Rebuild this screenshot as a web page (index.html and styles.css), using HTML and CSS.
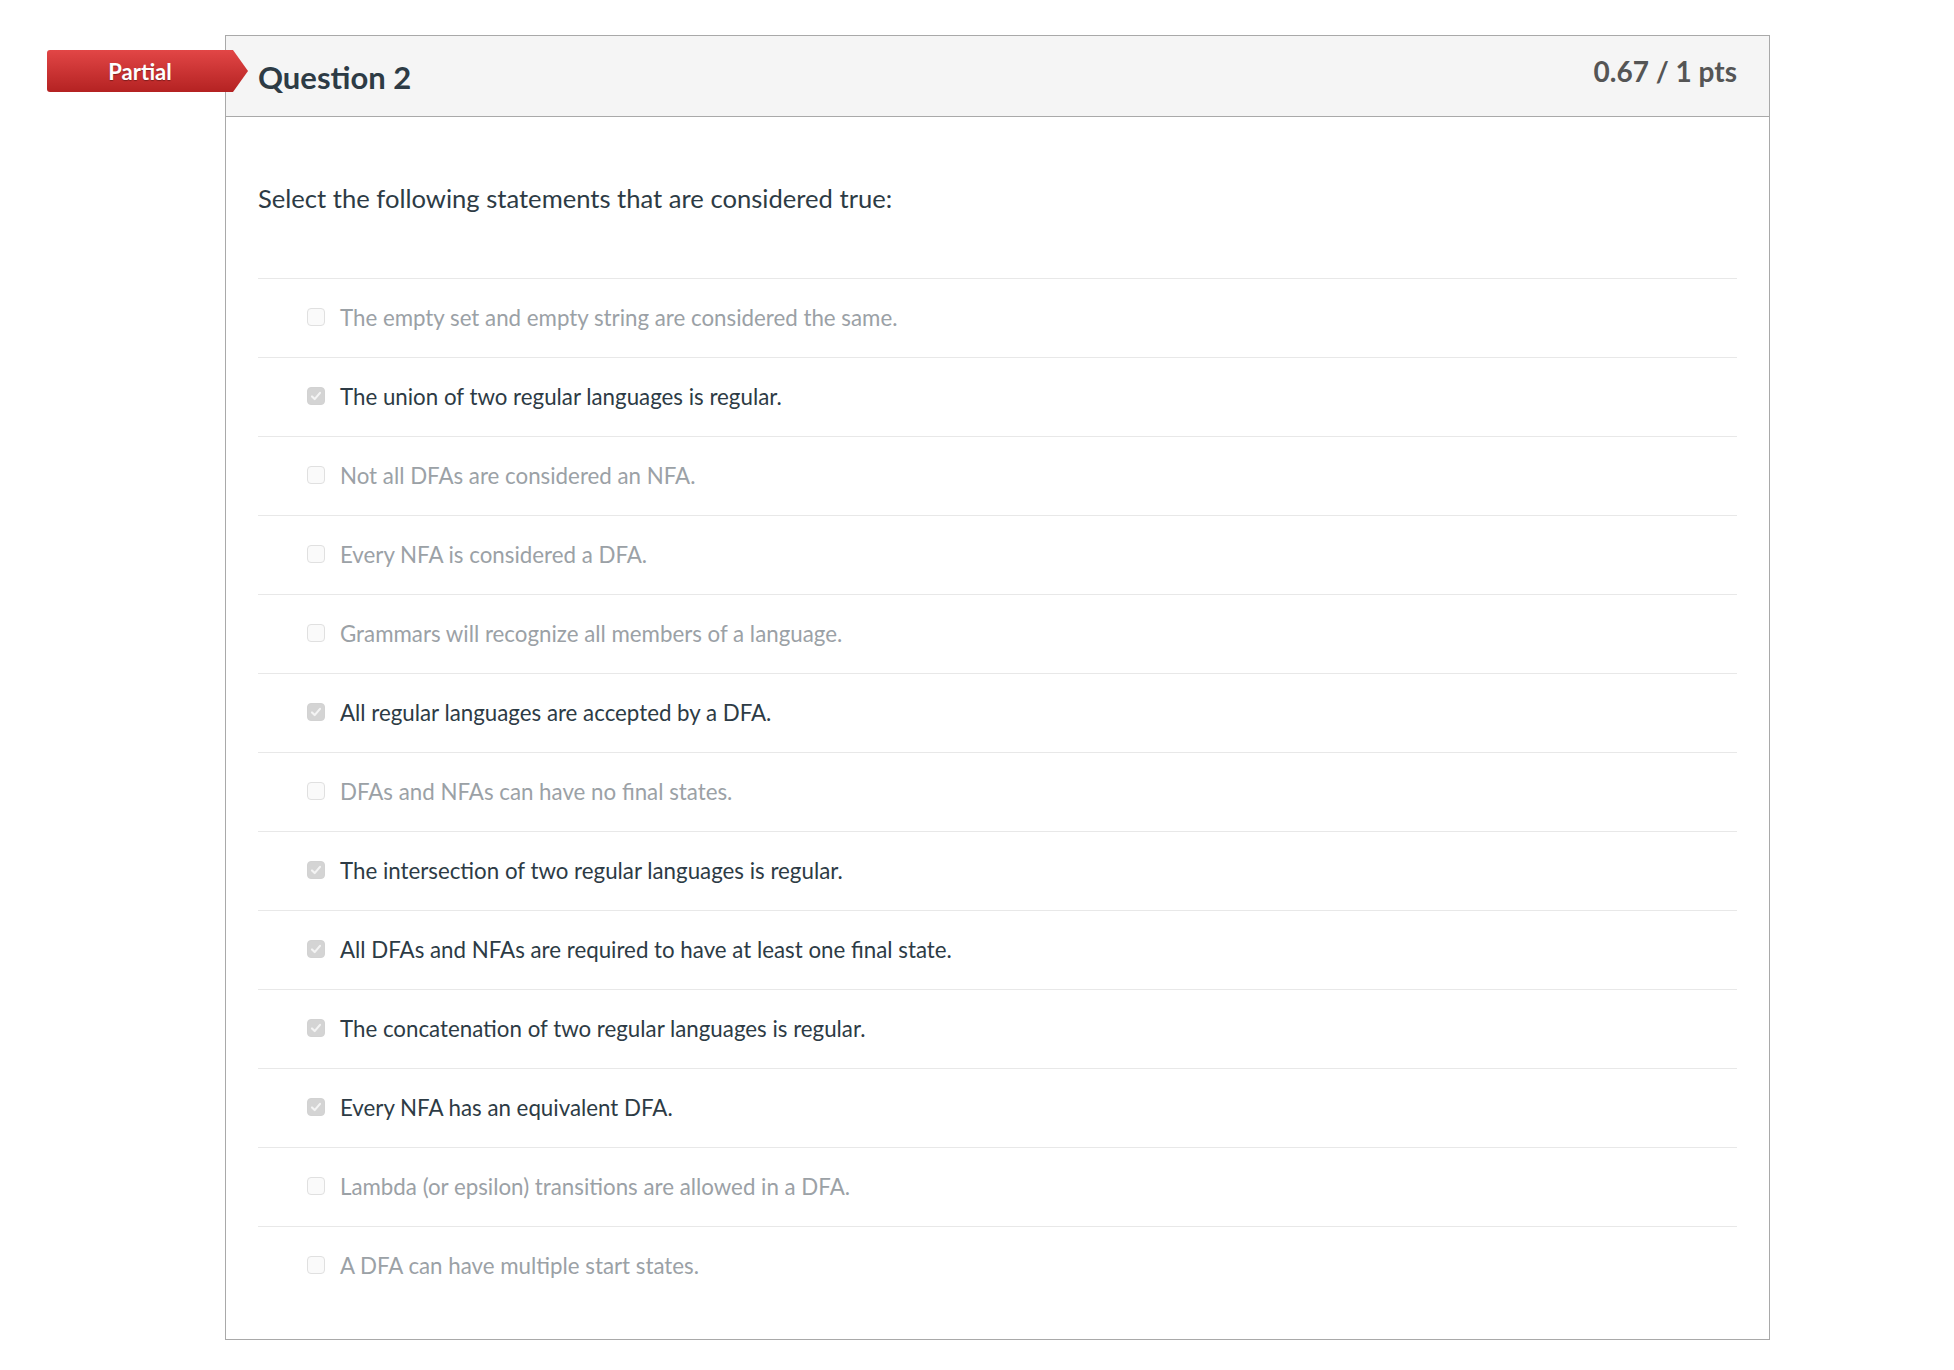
FILE: index.html
```html
<!DOCTYPE html>
<html lang="en">
<head>
    <meta charset="UTF-8">
    <meta name="viewport" content="width=device-width, initial-scale=1.0">
    <title>Question 2</title>
    <link rel="stylesheet" href="styles.css">
</head>
<body>
    <div class="quiz">
        <div class="question">
            <!-- Grade flag -->
            <span class="flag">Partial</span>

            <div class="question-header">
                <h2 class="question-title">Question 2</h2>
                <span class="points">0.67 / 1 pts</span>
            </div>

            <div class="question-body">
                <p class="question-text">Select the following statements that are considered true:</p>

                <ul class="answers">
                    <li class="answer"><span class="box"></span>The empty set and empty string are considered the same.</li>
                    <li class="answer selected"><span class="box"><svg viewBox="0 0 18 18"><path d="M4.5 9.5l3 3 6-7" /></svg></span>The union of two regular languages is regular.</li>
                    <li class="answer"><span class="box"></span>Not all DFAs are considered an NFA.</li>
                    <li class="answer"><span class="box"></span>Every NFA is considered a DFA.</li>
                    <li class="answer"><span class="box"></span>Grammars will recognize all members of a language.</li>
                    <li class="answer selected"><span class="box"><svg viewBox="0 0 18 18"><path d="M4.5 9.5l3 3 6-7" /></svg></span>All regular languages are accepted by a DFA.</li>
                    <li class="answer"><span class="box"></span>DFAs and NFAs can have no final states.</li>
                    <li class="answer selected"><span class="box"><svg viewBox="0 0 18 18"><path d="M4.5 9.5l3 3 6-7" /></svg></span>The intersection of two regular languages is regular.</li>
                    <li class="answer selected"><span class="box"><svg viewBox="0 0 18 18"><path d="M4.5 9.5l3 3 6-7" /></svg></span>All DFAs and NFAs are required to have at least one final state.</li>
                    <li class="answer selected"><span class="box"><svg viewBox="0 0 18 18"><path d="M4.5 9.5l3 3 6-7" /></svg></span>The concatenation of two regular languages is regular.</li>
                    <li class="answer selected"><span class="box"><svg viewBox="0 0 18 18"><path d="M4.5 9.5l3 3 6-7" /></svg></span>Every NFA has an equivalent DFA.</li>
                    <li class="answer"><span class="box"></span>Lambda (or epsilon) transitions are allowed in a DFA.</li>
                    <li class="answer"><span class="box"></span>A DFA can have multiple start states.</li>
                </ul>
            </div>
        </div>
    </div>
</body>
</html>
```

FILE: styles.css
```css
/* General Styling */
* {
    box-sizing: border-box;
}

body {
    margin: 0;
    background-color: #fff;
    font-family: Lato, "Open Sans", sans-serif;
    color: #2d3b45;
}

.quiz {
    padding: 35px 0 0 225px;
}

/* Question card */
.question {
    position: relative;
    width: 1545px;
    border: 1px solid #a9a9a9;
}

.flag {
    position: absolute;
    left: -179px;
    top: 14px;
    width: 201px;
    height: 42px;
    padding-right: 15px;
    display: flex;
    align-items: center;
    justify-content: center;
    background: linear-gradient(#e24646, #b42222);
    border-radius: 3px 0 0 3px;
    clip-path: polygon(0 0, 186px 0, 100% 50%, 186px 100%, 0 100%);
    color: #fff;
    font-size: 22px;
    font-weight: bold;
    text-shadow: 0 1px 1px rgba(0, 0, 0, 0.35);
}

.question-header {
    height: 81px;
    padding: 0 32px;
    display: flex;
    justify-content: space-between;
    align-items: center;
    background-color: #f5f5f5;
    border-bottom: 1px solid #a9a9a9;
}

.question-title {
    margin: 2px 0 0;
    font-size: 31px;
    font-weight: bold;
    color: #2d3b45;
}

.points {
    margin-bottom: 10px;
    font-size: 28px;
    font-weight: bold;
    color: #555;
}

.question-body {
    padding: 0 32px 34px;
}

.question-text {
    margin: 64px 0 63px;
    font-size: 25.6px;
    line-height: 34px;
}

/* Answers */
.answers {
    list-style: none;
    margin: 0;
    padding: 0;
}

.answer {
    height: 79px;
    display: flex;
    align-items: center;
    gap: 15px;
    padding-left: 49px;
    padding-bottom: 2px;
    border-top: 1px solid #e8e8e8;
    font-size: 22.3px;
    color: #9ba1a6;
}

.answer.selected {
    color: #2d3b45;
}

.box {
    width: 18px;
    height: 18px;
    flex-shrink: 0;
    border: 1px solid #e0e0e0;
    border-radius: 4px;
    background-color: #fafafa;
}

.selected .box {
    border-color: #d2d2d2;
    background-color: #d4d4d4;
}

.box svg {
    display: block;
    width: 100%;
    height: 100%;
    fill: none;
    stroke: #f4f4f4;
    stroke-width: 2.4;
    stroke-linecap: round;
    stroke-linejoin: round;
}
```
